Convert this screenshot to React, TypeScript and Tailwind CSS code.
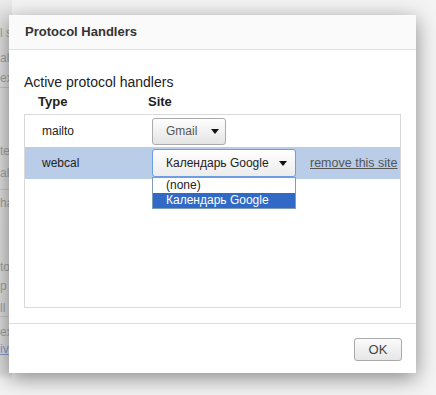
import React from "react";

const font = { fontFamily: '"Liberation Sans", Arial, sans-serif' };

function Arrow() {
  return (
    <svg width="8" height="5" viewBox="0 0 8 5" className="shrink-0">
      <path d="M0 0 L8 0 L4 5 Z" fill="#111" />
    </svg>
  );
}

export default function App() {
  return (
    <div
      className="relative w-[436px] h-[395px] overflow-hidden bg-[#f4f4f4]"
      style={font}
    >
      {/* background page (partially visible on left) */}
      <div className="flex flex-col w-[12px] h-[395px] text-[12px] leading-[14px] text-[#a2a2a2] bg-[linear-gradient(to_bottom,#ececec_0px,#e2e2e2_15px,#dedede_373px,#f2f2f2_380px,#f4f4f4_395px)]">
        <div className="mt-[26px] whitespace-nowrap">l se</div>
        <div className="mt-[11px] whitespace-nowrap">al</div>
        <div className="mt-[6px] whitespace-nowrap pb-[2px] border-b border-[#c8c8c8]">ex</div>
        <div className="mt-[56px] whitespace-nowrap">te</div>
        <div className="mt-[8px] whitespace-nowrap pb-[9px] border-b border-[#c8c8c8]">al</div>
        <div className="mt-[6px] whitespace-nowrap">ha</div>
        <div className="mt-[50px] whitespace-nowrap">to</div>
        <div className="mt-[5px] whitespace-nowrap">p</div>
        <div className="mt-[8px] whitespace-nowrap pb-[1px] border-b border-[#c8c8c8]">ll</div>
        <div className="mt-[8px] whitespace-nowrap">ex</div>
        <div className="mt-[3px] whitespace-nowrap text-[#8a9ad0] underline">iv</div>
      </div>

      {/* dialog overlay */}
      <div className="absolute left-[9px] top-[15px] w-[407px] h-[358px] bg-white flex flex-col shadow-[0_5px_20px_rgba(0,0,0,0.45)]">
        <div className="h-[35px] shrink-0 bg-[#fafafa] border-b border-[#e0e0e0] flex items-center pl-[16px] text-[13px] font-bold text-[#333]">
          Protocol Handlers
        </div>
        <div className="flex-1 flex flex-col px-[15px] pt-[24px]">
          <div className="text-[14px] leading-[16px] text-[#222]">Active protocol handlers</div>
          <div className="flex mt-[4px] h-[16px] text-[13px] leading-[16px] font-bold text-[#222]">
            <div className="w-[124px] pl-[14px]">Type</div>
            <div>Site</div>
          </div>
          <div className="mt-[4px] h-[194px] border border-[#d9d9d9] flex flex-col text-[12px] text-[#222]">
            <div className="h-[32px] flex items-center">
              <div className="w-[127px] pl-[17px]">mailto</div>
              <div className="w-[74px] h-[27px] border border-[#ababab] rounded-[3px] bg-gradient-to-b from-[#fefefe] to-[#e4e4e4] flex items-center justify-between pl-[13px] pr-[6px] text-[#555]">
                <span>Gmail</span>
                <Arrow />
              </div>
            </div>
            <div className="h-[32px] flex items-center bg-[#b9cde9]">
              <div className="w-[127px] pl-[17px]">webcal</div>
              <div className="relative w-[144px] h-[28px]">
                <div className="w-full h-full border border-[#6c9ee3] rounded-[3px] bg-gradient-to-b from-[#ffffff] to-[#ececec] flex items-center justify-between pl-[13px] pr-[8px] text-[#222]">
                  <span>Календарь Google</span>
                  <Arrow />
                </div>
                <div className="absolute left-0 top-[28px] w-[144px] border border-[#7f9db9] bg-white flex flex-col leading-[15px] text-[12px] z-10">
                  <div className="pl-[13px] h-[15px] text-[#222]">(none)</div>
                  <div className="pl-[13px] h-[15px] bg-[#3169c6] text-white">Календарь Google</div>
                </div>
              </div>
              <div className="ml-[14px] text-[12.5px] text-[#555] underline">remove this site</div>
            </div>
          </div>
        </div>
        <div className="h-[50px] shrink-0 border-t border-[#dcdce4] flex justify-end items-start pt-[14px] pr-[14px]">
          <div className="w-[48px] h-[23px] border border-[#aaaaaa] rounded-[3px] bg-gradient-to-b from-[#fbfbfb] to-[#e6e6e6] flex items-center justify-center text-[13px] text-[#444]">
            OK
          </div>
        </div>
      </div>
    </div>
  );
}
